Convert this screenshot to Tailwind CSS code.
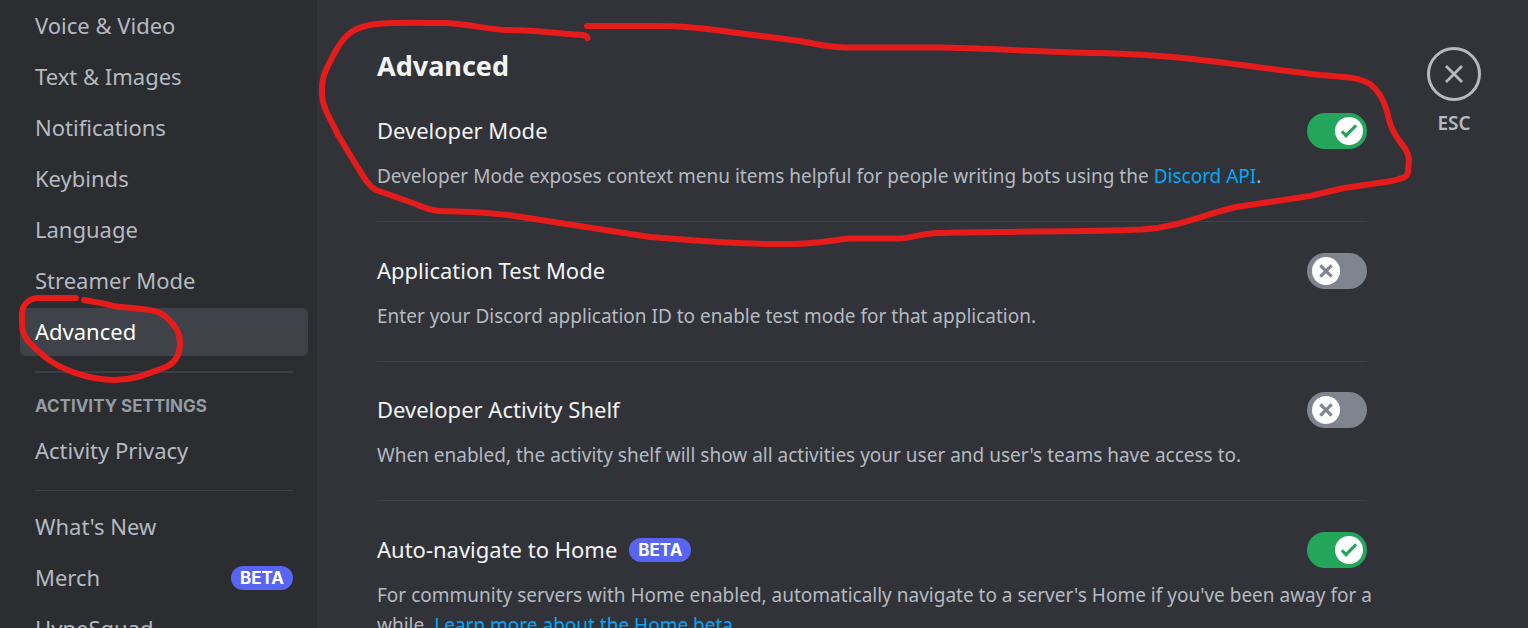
<!DOCTYPE html>
<html lang="en">
<head>
<meta charset="utf-8">
<meta name="viewport" content="width=device-width, initial-scale=1">
<title>Advanced settings</title>
<script src="https://cdn.jsdelivr.net/npm/@tailwindcss/browser@4"></script>
</head>
<body class="relative flex h-screen overflow-hidden bg-[#313338] font-['Noto_Sans',sans-serif] text-[#b5bac1]">
  <svg class="hidden" aria-hidden="true">
    <symbol id="check" viewBox="0 0 20 20"><path fill="currentColor" d="M7.89561 14.8538L6.30462 13.2629L14.3099 5.25755L15.9009 6.84854L7.89561 14.8538Z"/><path fill="currentColor" d="M4.08643 11.0903L5.67742 9.49929L9.4485 13.2704L7.85751 14.8614L4.08643 11.0903Z"/></symbol>
    <symbol id="cross" viewBox="0 0 20 20"><path fill="currentColor" d="M5.13231 6.72963L6.7233 5.13864L14.855 13.2704L13.264 14.8614L5.13231 6.72963Z"/><path fill="currentColor" d="M13.2704 5.13864L14.8614 6.72963L6.72963 14.8614L5.13864 13.2704L13.2704 5.13864Z"/></symbol>
  </svg>

  <nav class="flex w-[317px] shrink-0 flex-col bg-[#2b2d31] pt-[2px] pr-[9px] pl-5 text-[22px] leading-[30px]" aria-label="Settings">
    <div class="flex flex-col gap-[3px]">
      <a href="#voice" class="rounded-md px-[15px] pt-2 pb-2.5">Voice &amp; Video</a>
      <a href="#text" class="rounded-md px-[15px] pt-2 pb-2.5">Text &amp; Images</a>
      <a href="#notifications" class="rounded-md px-[15px] pt-2 pb-2.5">Notifications</a>
      <a href="#keybinds" class="rounded-md px-[15px] pt-2 pb-2.5">Keybinds</a>
      <a href="#language" class="rounded-md px-[15px] pt-2 pb-2.5">Language</a>
      <a href="#streamer" class="rounded-md px-[15px] pt-2 pb-2.5">Streamer Mode</a>
      <a href="#advanced" aria-current="page" class="rounded-md bg-[#404249] px-[15px] pt-2 pb-2.5 text-white">Advanced</a>
    </div>
    <hr class="mx-[15px] mt-[15px] border-t-2 border-[#3b3d44]">
    <h3 class="px-[15px] pt-[21px] pb-[9px] font-['Inter',sans-serif] text-[17px] leading-6 font-bold text-[#949ba4] uppercase">Activity Settings</h3>
    <a href="#privacy" class="rounded-md px-[15px] pt-2 pb-2.5">Activity Privacy</a>
    <hr class="mx-[15px] mt-[15px] mb-3 border-t border-[#3b3d44]">
    <div class="flex flex-col gap-[3px]">
      <a href="#new" class="rounded-md px-[15px] pt-2 pb-2.5">What's New</a>
      <a href="#merch" class="flex items-center justify-between rounded-md px-[15px] pt-2 pb-2.5">Merch
        <span class="mt-0.5 rounded-full bg-[#5865f2] px-[9px] font-['Inter',sans-serif] text-[17px] leading-6 font-bold text-white">BETA</span></a>
      <a href="#hypesquad" class="rounded-md px-[15px] pt-2 pb-2.5">HypeSquad</a>
    </div>
  </nav>

  <main class="min-w-0 flex-1 pt-[51px] pl-[60px] text-[19px] leading-[30px]">
    <h2 class="text-[27px] leading-[30px] font-bold text-[#f2f3f5]">Advanced</h2>

    <section class="mt-8 border-b border-[#3f4147] pb-[30px]">
      <label class="mb-3 flex items-start justify-between text-[22px] leading-[34px] text-[#f2f3f5]">Developer Mode
        <span class="relative h-9 w-[60px]">
          <input type="checkbox" checked class="block h-9 w-[60px] appearance-none rounded-full bg-[#80848e] checked:bg-[#23a55a]">
          <span class="pointer-events-none absolute top-1 right-1 flex size-7 items-center justify-center rounded-full bg-white text-[#23a55a]"><svg class="size-7"><use href="#check"/></svg></span>
        </span>
      </label>
      <p>Developer Mode exposes context menu items helpful for people writing bots using the <a href="#api" class="text-[#00a8fc]">Discord API</a>.</p>
    </section>

    <section class="mt-[31px] border-b border-[#3f4147] pb-[30px]">
      <label class="mb-3 flex items-start justify-between text-[22px] leading-[34px] text-[#f2f3f5]">Application Test Mode
        <span class="relative h-9 w-[60px]">
          <input type="checkbox" class="block h-9 w-[60px] appearance-none rounded-full bg-[#80848e] checked:bg-[#23a55a]">
          <span class="pointer-events-none absolute top-1 left-[5px] flex size-7 items-center justify-center rounded-full bg-white text-[#80848e]"><svg class="size-7"><use href="#cross"/></svg></span>
        </span>
      </label>
      <p>Enter your Discord application ID to enable test mode for that application.</p>
    </section>

    <section class="mt-[30px] border-b border-[#3f4147] pb-[30px]">
      <label class="mb-3 flex items-start justify-between text-[22px] leading-[34px] text-[#f2f3f5]">Developer Activity Shelf
        <span class="relative h-9 w-[60px]">
          <input type="checkbox" class="block h-9 w-[60px] appearance-none rounded-full bg-[#80848e] checked:bg-[#23a55a]">
          <span class="pointer-events-none absolute top-1 left-[5px] flex size-7 items-center justify-center rounded-full bg-white text-[#80848e]"><svg class="size-7"><use href="#cross"/></svg></span>
        </span>
      </label>
      <p>When enabled, the activity shelf will show all activities your user and user's teams have access to.</p>
    </section>

    <section class="mt-[31px]">
      <label class="mb-3 flex items-start justify-between text-[22px] leading-[34px] text-[#f2f3f5]">
        <span class="flex items-center gap-3">Auto-navigate to Home
          <span class="mt-0.5 rounded-full bg-[#5865f2] px-[9px] font-['Inter',sans-serif] text-[17px] leading-6 font-bold text-white">BETA</span></span>
        <span class="relative h-9 w-[60px]">
          <input type="checkbox" checked class="block h-9 w-[60px] appearance-none rounded-full bg-[#80848e] checked:bg-[#23a55a]">
          <span class="pointer-events-none absolute top-1 right-1 flex size-7 items-center justify-center rounded-full bg-white text-[#23a55a]"><svg class="size-7"><use href="#check"/></svg></span>
        </span>
      </label>
      <p class="-mr-4">For community servers with Home enabled, automatically navigate to a server's Home if you've been away for a while. <a href="#home" class="text-[#00a8fc]">Learn more about the Home beta</a>.</p>
    </section>
  </main>

  <aside class="w-[161px] shrink-0 pt-[47px] pl-[60px]">
    <button type="button" class="flex w-[54px] flex-col items-center gap-2 text-[19px] leading-7 font-semibold">
      <span class="flex size-[54px] items-center justify-center rounded-full border-[3px] border-[#b5bac1]">
        <svg class="size-[18px]" viewBox="0 0 18 18" fill="none" stroke="currentColor" stroke-width="2.7" aria-hidden="true"><path d="M1 1L17 17M17 1L1 17"/></svg>
      </span>
      ESC
    </button>
  </aside>

  <!-- Hand-drawn highlight strokes -->
  <svg class="pointer-events-none absolute top-0 left-0 h-[628px] w-[1528px]" viewBox="0 0 1528 628" fill="none" stroke="#e61c1c" stroke-width="6" stroke-linecap="round" stroke-linejoin="round" aria-hidden="true">
    <path d="M587 26H660C690 26 708 29 730 32L800 41C815 44 828 47 845 47.500H940C985 48 1035 52 1100 53C1190 55 1240 66 1320 75C1345 77 1358 77 1370 84C1379 91 1384 101 1387 111C1391 133 1398 138 1406 150C1410 157 1409 161 1408 172C1407 178 1402 178 1392 181L1344 188L1310 196L1236 207C1205 214 1180 227 1142 229.500C1080 232 1010 231 936 233C918 234 912 238 898 238.500H850C832 240 815 244 790 244C735 245 690 240 650 237L515 216C480 211 465 212 439 211C425 210 420 205 410 202L376 190C368 186 364 177 355 163L338 135C331 119 324 111 322.500 99C320 77 326 70 334 54C343 37 351 27 376 24C396 22 425 23 447 23C470 24 484 29 505 30C540 30 560 34 583 35Q587 36 587.500 38"/>
    <path d="M76 298H37C28 299 22 305 22 314V324C22 339 33 346 45 357C61 370 90 380 114 380C134 380 147 374 163 368C176 364 180 354 180 342C180 332 174 324 167 318C159 309 147 310 113 306C105 303 94 302 84 300"/>
  </svg>
</body>
</html>
